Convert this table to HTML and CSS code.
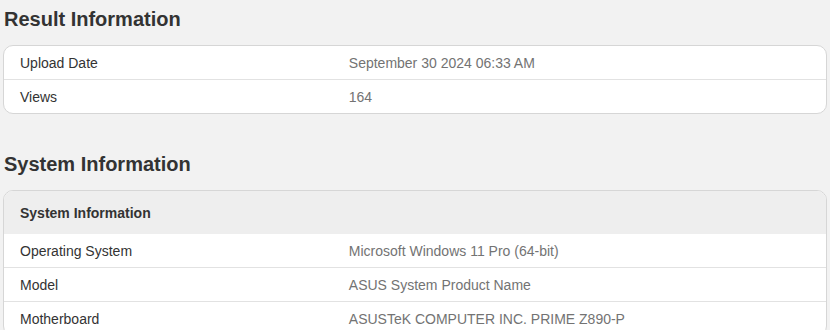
FILE: index.html
```html
<!DOCTYPE html>
<html>
<head>
<meta charset="utf-8">
<link rel="stylesheet" href="styles.css">
</head>
<body>
<div class="page">
  <h2 class="title title-first">Result Information</h2>
  <div class="card">
    <div class="row"><div class="label">Upload Date</div><div class="value">September 30 2024 06:33 AM</div></div>
    <div class="row"><div class="label">Views</div><div class="value">164</div></div>
  </div>
  <h2 class="title">System Information</h2>
  <div class="card">
    <div class="card-head">System Information</div>
    <div class="row"><div class="label">Operating System</div><div class="value">Microsoft Windows 11 Pro (64-bit)</div></div>
    <div class="row"><div class="label">Model</div><div class="value">ASUS System Product Name</div></div>
    <div class="row"><div class="label">Motherboard</div><div class="value">ASUSTeK COMPUTER INC. PRIME Z890-P</div></div>
  </div>
</div>
</body>
</html>
```
FILE: styles.css
```css
html, body {
  margin: 0;
  padding: 0;
  background: #f2f2f2;
  font-family: "Liberation Sans", Arial, sans-serif;
}
.page {
  padding: 0 3px 0 3px;
  width: 824px;
}
.title {
  margin: 38px 1px 14px 1px;
  font-size: 20px;
  line-height: 24px;
  font-weight: bold;
  color: #333;
}
.title-first {
  margin-top: 7px;
}
.card {
  background: #fff;
  border: 1px solid #d6d6d6;
  border-radius: 10px;
  overflow: hidden;
}
.card-head {
  background: #eeeeee;
  height: 43px;
  display: flex;
  align-items: center;
  padding: 0 16px;
  font-size: 14px;
  font-weight: bold;
  color: #333;
}
.row {
  display: grid;
  grid-template-columns: 40% 60%;
  height: 33px;
  align-items: center;
  font-size: 14px;
  border-bottom: 1px solid #e2e2e2;
}
.row:last-child {
  border-bottom: none;
}
.label {
  padding: 0 16px;
  color: #333;
}
.value {
  padding: 0 16px;
  color: #737373;
}
```
